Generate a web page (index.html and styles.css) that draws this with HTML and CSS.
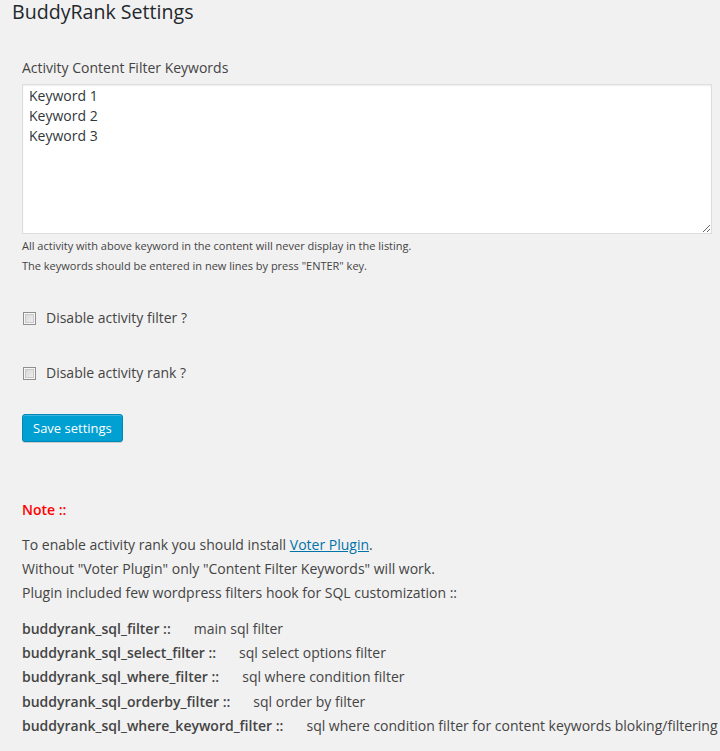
FILE: index.html
```html
<!DOCTYPE html>
<html lang="en">
<head>
<meta charset="utf-8">
<title>BuddyRank Settings</title>
<link rel="stylesheet" href="styles.css">
</head>
<body>
<div class="wrap">
  <h2 class="page-title">BuddyRank Settings</h2>
  <form class="settings">
    <div class="field">
      <label class="field-label" for="keywords">Activity Content Filter Keywords</label>
      <textarea id="keywords" class="keywords">Keyword 1
Keyword 2
Keyword 3</textarea>
      <p class="description">All activity with above keyword in the content will never display in the listing.<br>The keywords should be entered in new lines by press "ENTER" key.</p>
    </div>
    <label class="check"><input type="checkbox" class="check-box"><span>Disable activity filter ?</span></label>
    <label class="check"><input type="checkbox" class="check-box"><span>Disable activity rank ?</span></label>
    <div class="actions"><button type="button" class="button-primary">Save settings</button></div>
  </form>
  <div class="note">
    <p class="note-title">Note ::</p>
    <p class="note-text">To enable activity rank you should install <a href="#" class="link">Voter Plugin</a>.<br>Without "Voter Plugin" only "Content Filter Keywords" will work.<br>Plugin included few wordpress filters hook for SQL customization ::</p>
    <ul class="hooks">
      <li><b class="hook-name">buddyrank_sql_filter ::</b><span class="hook-desc">main sql filter</span></li>
      <li><b class="hook-name">buddyrank_sql_select_filter ::</b><span class="hook-desc">sql select options filter</span></li>
      <li><b class="hook-name">buddyrank_sql_where_filter ::</b><span class="hook-desc">sql where condition filter</span></li>
      <li><b class="hook-name">buddyrank_sql_orderby_filter ::</b><span class="hook-desc">sql order by filter</span></li>
      <li><b class="hook-name">buddyrank_sql_where_keyword_filter ::</b><span class="hook-desc">sql where condition filter for content keywords bloking/filtering</span></li>
    </ul>
  </div>
</div>
</body>
</html>
```
FILE: styles.css
```css
html, body {
  margin: 0;
  padding: 0;
  background: #f1f1f1;
}
body {
  font-family: "Open Sans", "Noto Sans", sans-serif;
  font-size: 14px;
  color: #444;
  overflow: hidden;
}
.wrap {
  padding: 0 0 0 22px;
}
.page-title {
  margin: 0 0 0 -10px;
  font-size: 19.6px;
  line-height: 24px;
  font-weight: 400;
  color: #23282d;
}
.settings {
  display: flex;
  flex-direction: column;
  align-items: flex-start;
}
.field {
  margin-top: 34px;
  width: 690px;
}
.field-label {
  display: block;
  line-height: 20px;
  height: 26px;
}
.keywords {
  display: block;
  box-sizing: border-box;
  width: 690px;
  height: 150px;
  margin: 0;
  padding: 1px 6px 2px;
  border: 1px solid #ddd;
  background: #fff;
  font-family: "Open Sans", "Noto Sans", sans-serif;
  font-size: 14px;
  line-height: 20px;
  color: #32373c;
  box-shadow: inset 0 1px 2px rgba(0,0,0,.07);
  outline: none;
}
.description {
  margin: 2px 0 0;
  font-size: 11px;
  line-height: 20px;
  color: #444;
}
.check {
  display: flex;
  align-items: center;
  gap: 10px;
  height: 20px;
  line-height: 20px;
}
.check:first-of-type { margin-top: 32px; }
.check + .check { margin-top: 35px; }
.check-box {
  appearance: none;
  -webkit-appearance: none;
  box-sizing: border-box;
  width: 13px;
  height: 13px;
  margin: 1px 0 0 1px;
  border: 1px solid #8e8f8f;
  background: linear-gradient(135deg, #d3d3d3 0%, #f4f4f4 100%);
  box-shadow: inset 0 0 0 1px #f7f7f7, inset 0 0 0 2px #c9c9c9;
}
.actions {
  margin-top: 31px;
}
.button-primary {
  box-sizing: border-box;
  height: 28px;
  margin: 0;
  padding: 0 10px 1px;
  font-family: "Open Sans", "Noto Sans", sans-serif;
  font-size: 13px;
  line-height: 26px;
  color: #fff;
  background: #00a0d2;
  border: 1px solid #0087b8;
  border-radius: 3px;
  box-shadow: inset 0 1px 0 rgba(120,200,230,.5), 0 1px 0 rgba(0,0,0,.15);
  cursor: pointer;
}
.note {
  margin-top: 56px;
}
.note-title {
  margin: 0;
  color: #f00;
  font-weight: 600;
  line-height: 24px;
}
.note-text {
  margin: 11px 0 0;
  line-height: 24px;
}
.link {
  color: #0073aa;
  text-decoration: underline;
}
.hooks {
  list-style: none;
  margin: 12px 0 0;
  padding: 0;
}
.hooks li {
  line-height: 24.2px;
  white-space: nowrap;
}
.hook-name {
  font-weight: 600;
}
.hook-desc {
  margin-left: 23px;
}
```
